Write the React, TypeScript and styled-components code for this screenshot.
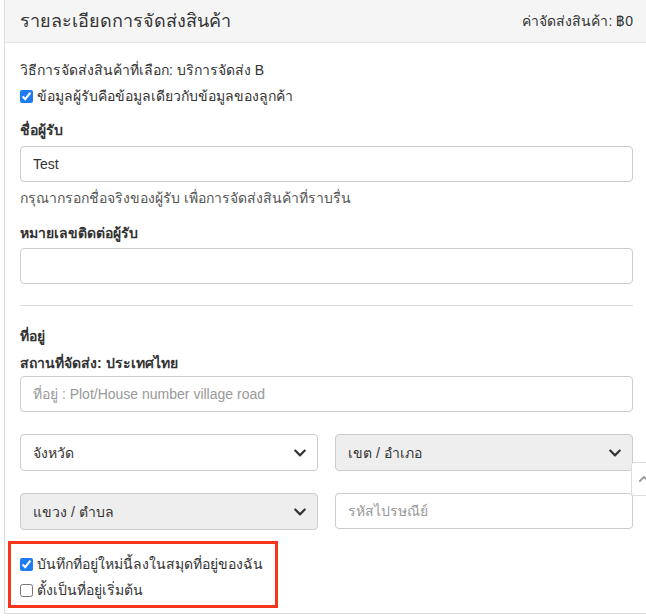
import styled, { createGlobalStyle } from "styled-components";
import { FaChevronDown, FaChevronUp } from "react-icons/fa";

const GlobalStyle = createGlobalStyle`
  html, body {
    margin: 0;
    padding: 0;
    overflow: hidden;
    background: #fff;
  }
  body {
    font-family: "Liberation Sans", Arial, "Noto Sans", sans-serif;
    font-size: 14px;
    color: #333;
  }
  * {
    box-sizing: border-box;
  }
`;

const Panel = styled.div`
  width: 660px;
  margin-left: 4px;
  border-left: 1px solid #ddd;
  border-bottom: 1px solid #ddd;
`;

const PanelHeader = styled.div`
  height: 43px;
  padding-left: 15px;
  background: #f5f5f5;
  border-bottom: 1px solid #e4e4e4;
`;

const HeaderInner = styled.div`
  width: 613px;
  height: 42px;
  display: flex;
  align-items: center;
  justify-content: space-between;
`;

const PanelTitle = styled.h3`
  margin: 0;
  font-size: 18px;
  font-weight: 400;
  line-height: 1;
  color: #333;
`;

const ShippingFee = styled.span`
  font-size: 14px;
  color: #333;
`;

const PanelBody = styled.div`
  padding: 17px 0 5px 15px;
`;

const Content = styled.div`
  width: 613px;
`;

const Line = styled.div<{ $top?: number; $bold?: boolean }>`
  margin-top: ${(p) => p.$top ?? 0}px;
  line-height: 20px;
  font-weight: ${(p) => (p.$bold ? 700 : 400)};
`;

const CheckRow = styled.label<{ $top?: number }>`
  display: flex;
  align-items: center;
  gap: 4px;
  margin-top: ${(p) => p.$top ?? 0}px;
  line-height: 20px;
  cursor: pointer;
  input {
    margin: 0;
    width: 13px;
    height: 13px;
    accent-color: #1f7cf0;
  }
`;

const FieldLabel = styled.label<{ $top?: number }>`
  display: block;
  margin-top: ${(p) => p.$top ?? 0}px;
  line-height: 20px;
  font-weight: 700;
`;

const TextInput = styled.input<{ $top?: number }>`
  display: block;
  width: 100%;
  height: 36px;
  margin-top: ${(p) => p.$top ?? 0}px;
  padding: 0 12px;
  border: 1px solid #ccc;
  border-radius: 4px;
  font-family: inherit;
  font-size: 14px;
  color: #333;
  background: #fff;
  &::placeholder {
    color: #999;
  }
`;

const HelpText = styled.div`
  margin-top: 6px;
  line-height: 20px;
  color: #555;
`;

const Divider = styled.hr`
  margin: 21px 0 0;
  border: 0;
  border-top: 1px solid #ddd;
`;

const Grid = styled.div`
  display: grid;
  grid-template-columns: 298px 298px;
  justify-content: space-between;
  margin-top: 22px;
`;

const SelectBox = styled.div<{ $disabled?: boolean }>`
  height: 37px;
  display: flex;
  align-items: center;
  justify-content: space-between;
  padding: 0 10px 0 12px;
  border: 1px solid #ccc;
  border-radius: 4px;
  background: ${(p) => (p.$disabled ? "#eee" : "#fff")};
  color: #333;
  svg {
    color: #333;
  }
`;

const SaveBox = styled.div`
  width: 270px;
  margin: 11px 0 0 -12px;
  padding: 10px 9px 5px;
  border: 3px solid #f6361b;
`;

const ScrollTop = styled.div`
  position: fixed;
  left: 631px;
  top: 462px;
  width: 40px;
  height: 34px;
  display: flex;
  align-items: center;
  padding-left: 6px;
  background: #fff;
  border: 1px solid #ddd;
  border-radius: 3px;
  color: #999;
`;

export default function App() {
  return (
    <>
      <GlobalStyle />
      <Panel>
        <PanelHeader>
          <HeaderInner>
            <PanelTitle>รายละเอียดการจัดส่งสินค้า</PanelTitle>
            <ShippingFee>ค่าจัดส่งสินค้า: ฿0</ShippingFee>
          </HeaderInner>
        </PanelHeader>
        <PanelBody>
          <Content>
            <Line>วิธีการจัดส่งสินค้าที่เลือก: บริการจัดส่ง B</Line>
            <CheckRow $top={6}>
              <input type="checkbox" defaultChecked />
              ข้อมูลผู้รับคือข้อมูลเดียวกับข้อมูลของลูกค้า
            </CheckRow>

            <FieldLabel $top={14}>ชื่อผู้รับ</FieldLabel>
            <TextInput $top={6} defaultValue="Test" />
            <HelpText>กรุณากรอกชื่อจริงของผู้รับ เพื่อการจัดส่งสินค้าที่ราบรื่น</HelpText>

            <FieldLabel $top={15}>หมายเลขติดต่อผู้รับ</FieldLabel>
            <TextInput $top={5} />

            <Divider />

            <FieldLabel $top={20}>ที่อยู่</FieldLabel>
            <Line $top={7} $bold>
              สถานที่จัดส่ง: ประเทศไทย
            </Line>
            <TextInput $top={3} placeholder="ที่อยู่ : Plot/House number village road" />

            <Grid>
              <SelectBox>
                จังหวัด
                <FaChevronDown size={14} />
              </SelectBox>
              <SelectBox $disabled>
                เขต / อำเภอ
                <FaChevronDown size={14} />
              </SelectBox>
            </Grid>
            <Grid>
              <SelectBox $disabled>
                แขวง / ตำบล
                <FaChevronDown size={14} />
              </SelectBox>
              <TextInput placeholder="รหัสไปรษณีย์" />
            </Grid>

            <SaveBox>
              <CheckRow>
                <input type="checkbox" defaultChecked />
                บันทึกที่อยู่ใหม่นี้ลงในสมุดที่อยู่ของฉัน
              </CheckRow>
              <CheckRow $top={6}>
                <input type="checkbox" />
                ตั้งเป็นที่อยู่เริ่มต้น
              </CheckRow>
            </SaveBox>
          </Content>
        </PanelBody>
      </Panel>
      <ScrollTop>
        <FaChevronUp size={12} />
      </ScrollTop>
    </>
  );
}
